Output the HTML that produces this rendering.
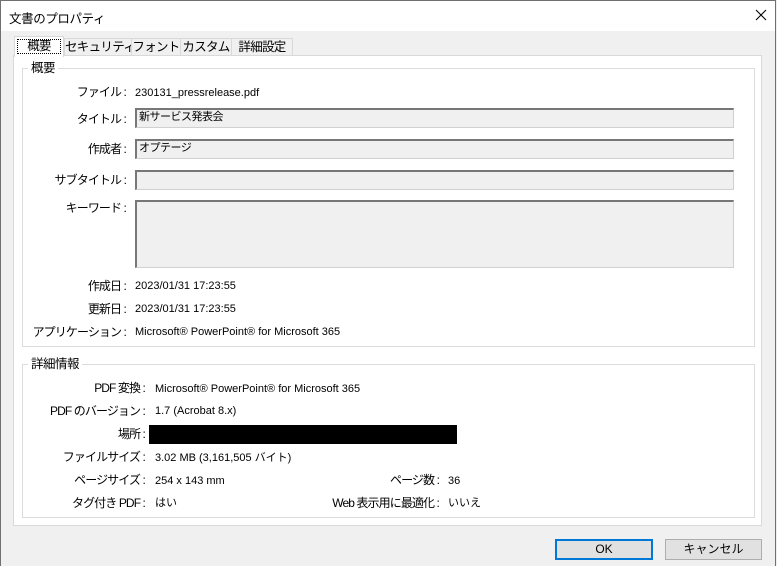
<!DOCTYPE html>
<html><head><meta charset="utf-8"><style>
*{margin:0;padding:0;box-sizing:border-box}
body{width:777px;height:566px;background:#f0f0f0;position:relative;overflow:hidden;font-family:"Liberation Sans","Noto Sans CJK JP",sans-serif;color:#000}
.a{position:absolute;white-space:nowrap}
.frame{position:absolute;left:0;top:0;width:776px;height:566px;border:1px solid #707070;border-bottom:none}
.title{position:absolute;left:1px;top:1px;width:774px;height:30px;background:#fff}
.panel{position:absolute;left:13px;top:55px;width:749px;height:471px;background:#fff;border:1px solid #d9d9d9}
.grp{position:absolute;border:1px solid #dcdcdc}
.lg{position:absolute;background:#fff;padding:0 3px;font-size:12.5px;line-height:14px;letter-spacing:-0.5px}
.l{position:absolute;text-align:right;font-size:12px;line-height:14px;white-space:nowrap;letter-spacing:-0.9px}
.v{position:absolute;font-size:11px;line-height:14px;white-space:nowrap}
.f{position:absolute;left:135px;width:599px;background:#f0f0f0;border:1px solid #d0d0d0;border-top:2px solid #777;border-left:2px solid #777;font-size:11px;padding-left:2px;line-height:15px;letter-spacing:-0.5px}
.tab{position:absolute;top:38px;height:18px;background:#f0f0f0;border:1px solid #d9d9d9;border-bottom:none;font-size:12.5px;line-height:16px;text-align:center;letter-spacing:-0.7px;white-space:nowrap;overflow:hidden}
.btn{position:absolute;top:539px;height:21px;background:#e1e1e1;border:1px solid #adadad;font-size:12px;line-height:18px;text-align:center}
</style></head><body>
<div class="frame"></div>
<div class="title"></div>
<div class="a" style="left:9px;top:8px;font-size:12.5px;letter-spacing:-0.4px">文書のプロパティ</div>
<svg class="a" style="left:755px;top:9px" width="12" height="12" viewBox="0 0 12 12"><path d="M1 1L11 11M11 1L1 11" stroke="#000" stroke-width="1.1"/></svg>

<div class="tab" style="left:64px;width:68px">セキュリティ</div>
<div class="tab" style="left:131px;width:50px">フォント</div>
<div class="tab" style="left:180px;width:52px">カスタム</div>
<div class="tab" style="left:231px;width:62px">詳細設定</div>
<div class="panel"></div>
<div class="tab" style="left:14px;top:36px;width:50px;height:21px;background:#fff;border-color:#d9d9d9"><div style="margin:2px 2px;border:1px dotted #000;line-height:13px">概要</div></div>

<div class="grp" style="left:22px;top:68px;width:733px;height:279px"></div>
<div class="lg" style="left:28px;top:61px">概要</div>
<div class="l" style="right:651px;top:85px">ファイル :</div><div class="v" style="left:135px;top:86px">230131_pressrelease.pdf</div>
<div class="l" style="right:651px;top:112px">タイトル :</div><div class="f" style="top:108px;height:20px">新サービス発表会</div>
<div class="l" style="right:651px;top:142px">作成者 :</div><div class="f" style="top:139px;height:20px">オプテージ</div>
<div class="l" style="right:651px;top:173px">サブタイトル :</div><div class="f" style="top:170px;height:20px"></div>
<div class="l" style="right:651px;top:201px">キーワード :</div><div class="f" style="top:200px;height:68px"></div>
<div class="l" style="right:651px;top:279px">作成日 :</div><div class="v" style="left:135px;top:279px">2023/01/31 17:23:55</div>
<div class="l" style="right:651px;top:302px">更新日 :</div><div class="v" style="left:135px;top:302px">2023/01/31 17:23:55</div>
<div class="l" style="right:651px;top:325px">アプリケーション :</div><div class="v" style="left:135px;top:325px">Microsoft® PowerPoint® for Microsoft 365</div>

<div class="grp" style="left:22px;top:364px;width:733px;height:154px"></div>
<div class="lg" style="left:28px;top:357px">詳細情報</div>
<div class="l" style="right:632px;top:381px">PDF 変換 :</div><div class="v" style="left:155px;top:382px">Microsoft® PowerPoint® for Microsoft 365</div>
<div class="l" style="right:632px;top:404px">PDF のバージョン :</div><div class="v" style="left:155px;top:404px">1.7 (Acrobat 8.x)</div>
<div class="l" style="right:632px;top:427px">場所 :</div><div class="a" style="left:149px;top:425px;width:308px;height:19px;background:#000"></div>
<div class="l" style="right:632px;top:450px">ファイルサイズ :</div><div class="v" style="left:155px;top:451px">3.02 MB (3,161,505 バイト)</div>
<div class="l" style="right:632px;top:473px">ページサイズ :</div><div class="v" style="left:155px;top:474px">254 x 143 mm</div>
<div class="l" style="right:632px;top:496px">タグ付き PDF :</div><div class="v" style="left:155px;top:496px">はい</div>
<div class="l" style="right:338px;top:473px">ページ数 :</div><div class="v" style="left:448px;top:474px">36</div>
<div class="l" style="right:338px;top:496px">Web 表示用に最適化 :</div><div class="v" style="left:448px;top:496px">いいえ</div>

<div class="btn" style="left:555px;width:98px;border:2px solid #0078d7;line-height:17px">OK</div>
<div class="btn" style="left:665px;width:97px">キャンセル</div>
</body></html>
